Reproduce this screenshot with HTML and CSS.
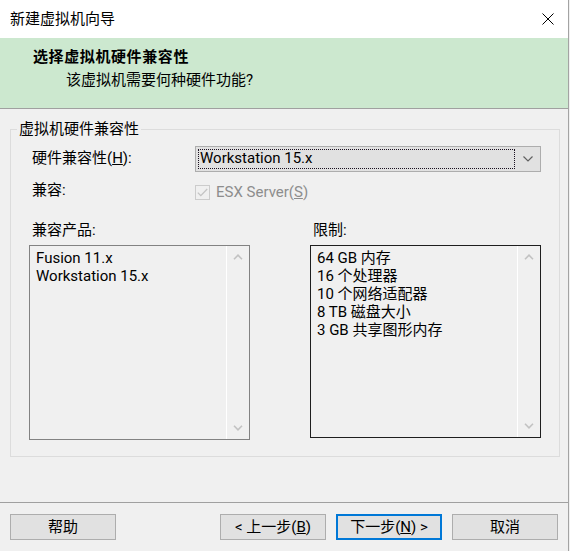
FILE: index.html
```html
<!DOCTYPE html>
<html lang="zh-CN">
<head>
	<meta charset="utf-8">
	<title>新建虚拟机向导</title>
	<link rel="stylesheet" href="styles.css">
</head>
<body>
	<div class="window">
		<div class="titlebar">
			<span class="title">新建虚拟机向导</span>
			<svg class="close" width="12" height="12" viewBox="0 0 12 12">
				<path d="M0.5 0.5 L11.5 11.5 M11.5 0.5 L0.5 11.5" stroke="#000" stroke-width="1" fill="none"/>
			</svg>
		</div>

		<div class="header">
			<div class="header-title">选择虚拟机硬件兼容性</div>
			<div class="header-sub">该虚拟机需要何种硬件功能?</div>
		</div>

		<div class="main">
			<fieldset class="group">
				<legend>虚拟机硬件兼容性</legend>

				<div class="form-row">
					<label class="form-label">硬件兼容性(<u>H</u>):</label>
					<div class="combo">
						<span class="combo-value">Workstation 15.x</span>
						<svg class="combo-arrow" width="10" height="6" viewBox="0 0 10 6">
							<path d="M0.5 0.5 L5 5 L9.5 0.5" stroke="#606060" stroke-width="1.2" fill="none"/>
						</svg>
					</div>
				</div>

				<div class="form-row">
					<label class="form-label">兼容:</label>
					<div class="check">
						<span class="check-box">
							<svg width="11" height="9" viewBox="0 0 11 9">
								<path d="M0.8 4.6 L3.8 7.6 L10.2 1" stroke="#c4c4c4" stroke-width="1.3" fill="none"/>
							</svg>
						</span>
						<span class="check-text">ESX Server(<u>S</u>)</span>
					</div>
				</div>

				<div class="lists">
					<div class="list-col">
						<div class="list-label">兼容产品:</div>
						<div class="listbox listbox-left">
							<ul class="list-items">
								<li>Fusion 11.x</li>
								<li>Workstation 15.x</li>
							</ul>
							<div class="scrollbar">
								<span class="scroll-btn">
									<svg width="10" height="6" viewBox="0 0 10 6"><path d="M1 5.2 L5 1.2 L9 5.2" stroke="#c2c2c2" stroke-width="1.6" fill="none"/></svg>
								</span>
								<span class="scroll-btn">
									<svg width="10" height="6" viewBox="0 0 10 6"><path d="M1 0.8 L5 4.8 L9 0.8" stroke="#c2c2c2" stroke-width="1.6" fill="none"/></svg>
								</span>
							</div>
						</div>
					</div>

					<div class="list-col">
						<div class="list-label">限制:</div>
						<div class="listbox listbox-right">
							<ul class="list-items">
								<li>64 GB 内存</li>
								<li>16 个处理器</li>
								<li>10 个网络适配器</li>
								<li>8 TB 磁盘大小</li>
								<li>3 GB 共享图形内存</li>
							</ul>
							<div class="scrollbar">
								<span class="scroll-btn">
									<svg width="10" height="6" viewBox="0 0 10 6"><path d="M1 5.2 L5 1.2 L9 5.2" stroke="#c2c2c2" stroke-width="1.6" fill="none"/></svg>
								</span>
								<span class="scroll-btn">
									<svg width="10" height="6" viewBox="0 0 10 6"><path d="M1 0.8 L5 4.8 L9 0.8" stroke="#c2c2c2" stroke-width="1.6" fill="none"/></svg>
								</span>
							</div>
						</div>
					</div>
				</div>
			</fieldset>
		</div>

		<div class="footer">
			<button class="btn btn-help">帮助</button>
			<button class="btn">&lt; 上一步(<u>B</u>)</button>
			<button class="btn btn-default">下一步(<u>N</u>) &gt;</button>
			<button class="btn">取消</button>
		</div>
	</div>
</body>
</html>
```

FILE: styles.css
```css
body {
	margin: 0;
	background-color: #f0f0f0;
	font-family: Roboto, "Noto Sans CJK SC", sans-serif;
	font-size: 15px;
	color: #000;
}

ul {
	margin: 0;
	padding: 0;
	list-style: none;
}

.window {
	width: 568px;
	height: 551px;
	border-right: 1px solid #a3a3a3;
	display: flex;
	flex-direction: column;
	background-color: #f0f0f0;
}

/* title bar */
.titlebar {
	height: 38px;
	background-color: #fff;
	display: flex;
	align-items: center;
	padding: 0 14px 0 10px;
	flex-shrink: 0;
}

.titlebar .title {
	flex: 1;
	line-height: 20px;
}

/* green header */
.header {
	height: 71px;
	box-sizing: border-box;
	padding: 9px 0 0 33px;
	background-color: #cce8cf;
	border-bottom: 1px solid #a0a0a0;
	flex-shrink: 0;
}

.header-title {
	font-weight: bold;
	line-height: 20px;
	letter-spacing: 0.6px;
}

.header-sub {
	margin-top: 3px;
	padding-left: 33px;
	line-height: 20px;
}

/* group box */
.main {
	padding: 10px 11px 0 10px;
}

.group {
	margin: 0;
	padding: 7px 18px 16px 21px;
	border: 1px solid #dcdcdc;
}

.group legend {
	margin-left: -15px;
	padding: 0 2px;
	line-height: 20px;
}

.form-row {
	display: flex;
	align-items: center;
	height: 26px;
	margin-bottom: 6px;
}

.form-label {
	width: 163px;
	line-height: 20px;
	margin-top: -3px;
}

.combo {
	flex: 1;
	height: 26px;
	box-sizing: border-box;
	border: 1px solid #adadad;
	background-color: #e1e1e1;
	display: flex;
	align-items: center;
	padding: 2px 0 2px 2px;
}

.combo-value {
	width: 317px;
	height: 20px;
	box-sizing: border-box;
	border: 1px dotted #1a1020;
	line-height: 17px;
	padding-left: 1px;
}

.combo-arrow {
	margin-left: 8px;
}

.check {
	display: flex;
	align-items: center;
	color: #8d8d8d;
	margin-top: 2px;
}

.check-box {
	width: 15px;
	height: 15px;
	box-sizing: border-box;
	border: 1px solid #cccccc;
	display: flex;
	align-items: center;
	justify-content: center;
	margin-right: 6px;
}

.check-text {
	line-height: 20px;
}

/* list boxes */
.lists {
	display: flex;
	gap: 60px;
	margin: 16px 0 0 -3px;
}

.list-label {
	padding-left: 3px;
	line-height: 20px;
	margin-bottom: 5px;
}

.listbox {
	display: flex;
	height: 195px;
	box-sizing: border-box;
	border: 1px solid #828282;
}

.listbox-left {
	width: 221px;
}

.listbox-right {
	width: 231px;
	height: 193px;
	border-color: #1e1e1e;
}

.list-items {
	flex: 1;
	padding: 3px 0 0 6px;
	line-height: 18px;
}

.scrollbar {
	width: 22px;
	border-left: 1px solid #fff;
	display: flex;
	flex-direction: column;
	justify-content: space-between;
}

.scroll-btn {
	height: 22px;
	display: flex;
	align-items: center;
	justify-content: center;
}

/* buttons */
.footer {
	margin-top: auto;
	border-top: 1px solid #a0a0a0;
	padding: 11px 10px;
	display: flex;
	gap: 10px;
}

.btn {
	width: 106px;
	height: 26px;
	box-sizing: border-box;
	border: 1px solid #adadad;
	background-color: #e1e1e1;
	font-family: Roboto, "Noto Sans CJK SC", sans-serif;
	font-size: 15px;
	color: #000;
	padding: 0;
	line-height: 20px;
}

.btn-help {
	margin-right: auto;
}

.btn-default {
	border: 2px solid #0078d7;
}
```
